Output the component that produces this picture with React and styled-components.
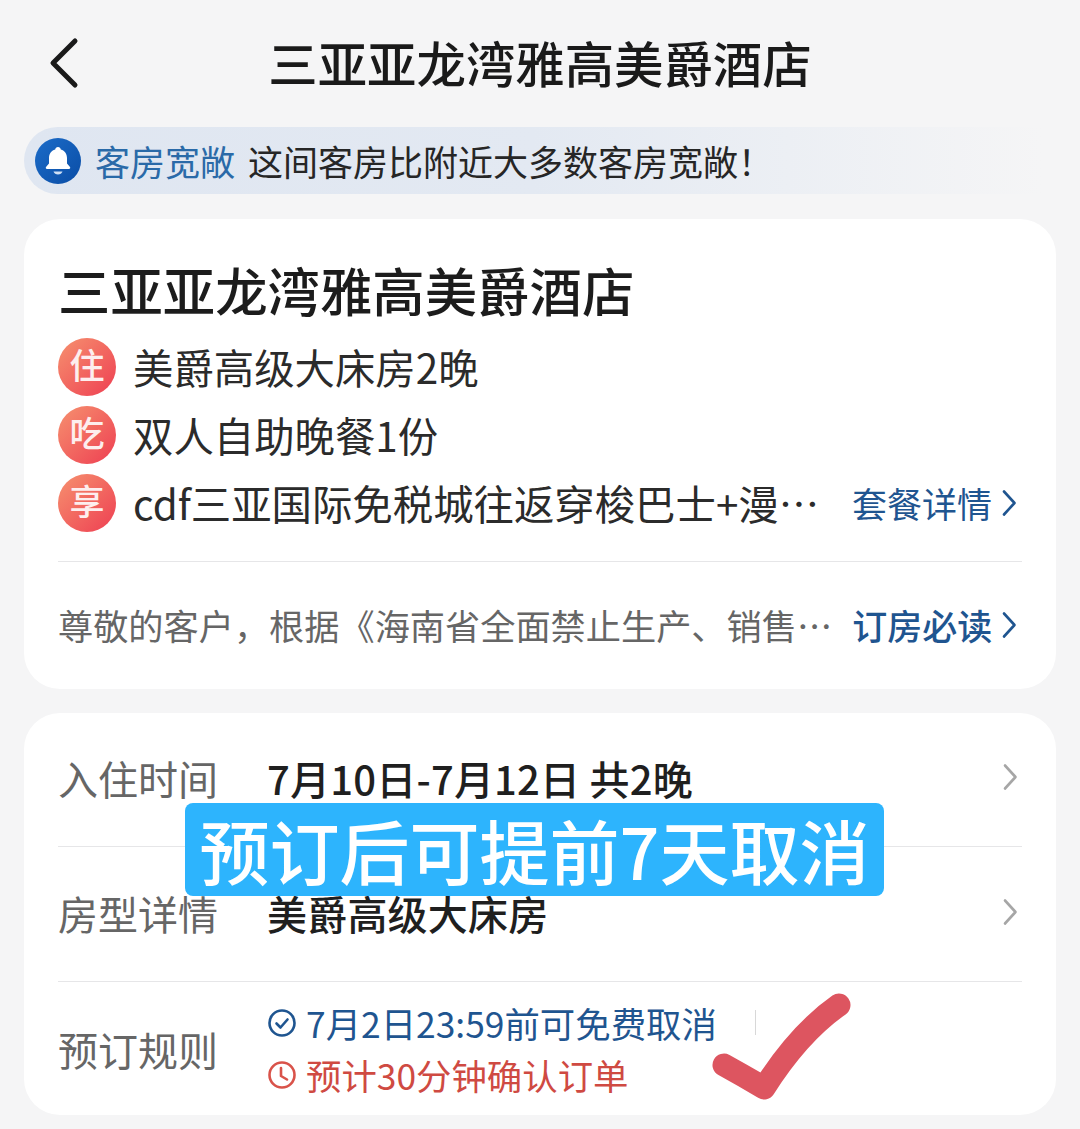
import React from "react";
import styled, { createGlobalStyle } from "styled-components";

const GlobalStyle = createGlobalStyle`
  html, body {
    margin: 0;
    padding: 0;
    background: #f5f5f6;
  }
  * {
    box-sizing: border-box;
  }
`;

const Page = styled.div`
  width: 1080px;
  height: 1129px;
  overflow: hidden;
  background: #f5f5f6;
  padding: 0 24px;
  display: flex;
  flex-direction: column;
  font-family: "Noto Sans CJK SC", "Noto Sans", sans-serif;
  color: #222;
`;

const Header = styled.div`
  height: 127px;
  display: flex;
  align-items: center;
  justify-content: center;
  position: relative;
  padding-bottom: 4px;
`;

const BackButton = styled.svg`
  position: absolute;
  left: 24px;
  top: 37px;
`;

const HeaderTitle = styled.div`
  font-size: 49.400px;
  line-height: 60px;
  font-weight: 500;
  color: #1a1a1a;
`;

const Banner = styled.div`
  height: 67px;
  width: 1018px;
  flex: none;
  display: flex;
  align-items: center;
  padding-left: 11px;
  border-radius: 34px 0 0 34px;
  background: linear-gradient(90deg, #dfe6f1 0%, #e3e9f2 50%, #f5f5f6 100%);
`;

const BellBadge = styled.div`
  width: 46px;
  height: 46px;
  border-radius: 50%;
  background: linear-gradient(135deg, #1c6cc8, #0a4da6);
  display: flex;
  align-items: center;
  justify-content: center;
  flex: none;
`;

const BannerTag = styled.span`
  font-size: 35px;
  color: #2a6aa8;
  margin-left: 14px;
  line-height: 44px;
`;

const BannerText = styled.span`
  font-size: 35px;
  color: #262626;
  margin-left: 13px;
  line-height: 44px;
`;

const Card = styled.div`
  background: #fff;
  border-radius: 36px;
  padding: 0 34px;
  display: flex;
  flex-direction: column;
  position: relative;
`;

const PackageCard = styled(Card)`
  margin-top: 25px;
  height: 470px;
  padding-top: 37px;
`;

const BookingCard = styled(Card)`
  margin-top: 24px;
  height: 402px;
`;

const HotelName = styled.div`
  font-size: 52.400px;
  line-height: 66px;
  font-weight: 500;
  color: #1c1c1c;
  margin-bottom: 11px;
`;

const PerkRow = styled.div`
  height: 70px;
  display: flex;
  align-items: center;
  gap: 17px;
`;

const PerkIcon = styled.div`
  width: 58px;
  height: 58px;
  border-radius: 50%;
  flex: none;
  background: linear-gradient(135deg, #f6916f, #ee3f52);
  color: #fdeeee;
  font-size: 35px;
  font-weight: 500;
  line-height: 52px;
  text-align: center;
`;

const PerkText = styled.div`
  font-size: 40.400px;
  line-height: 52px;
  color: #2b2b2b;
  flex: 1;
  white-space: nowrap;
`;

const MoreLink = styled.div`
  display: flex;
  align-items: center;
  gap: 9px;
  padding-right: 5px;
  font-size: 35px;
  line-height: 46px;
  font-weight: ${({ $strong }) => ($strong ? 500 : 400)};
  color: #1f5590;
  white-space: nowrap;
  flex: none;
`;

const Divider = styled.div`
  height: 1px;
  background: #e6e6e8;
  flex: none;
`;

const PerkDivider = styled(Divider)`
  margin-top: 24px;
`;

const NoticeRow = styled.div`
  display: flex;
  align-items: center;
  gap: 20px;
  height: 130px;
  padding-bottom: 1px;
`;

const NoticeText = styled.div`
  font-size: 35.200px;
  line-height: 46px;
  color: #666;
  flex: 1;
  white-space: nowrap;
`;

const InfoRow = styled.div`
  height: ${({ $h }) => $h}px;
  padding-bottom: ${({ $lift }) => $lift || 0}px;
  display: flex;
  align-items: center;
  flex: none;
`;

const InfoLabel = styled.div`
  width: 209px;
  font-size: 40px;
  line-height: 52px;
  color: #666;
  flex: none;
`;

const InfoValue = styled.div`
  flex: 1;
  font-size: 40px;
  line-height: 50px;
  font-weight: 500;
  letter-spacing: 0.200px;
  color: #1f1f1f;
  white-space: nowrap;
`;

const RowArrow = styled.div`
  display: flex;
  padding-right: 4px;
  margin-top: -2px;
`;

const Rules = styled.div`
  display: flex;
  flex-direction: column;
  gap: 8px;
`;

const RuleLine = styled.div`
  display: flex;
  align-items: center;
  gap: 9px;
  font-size: 35.400px;
  line-height: 44px;
  color: ${({ $color }) => $color};
  white-space: nowrap;
`;

const CancelBadge = styled.div`
  position: absolute;
  left: 161px;
  top: 90px;
  width: 699px;
  height: 93px;
  border-radius: 8px;
  background: #2db4fd;
  color: #fff;
  font-size: 70px;
  line-height: 93px;
  font-weight: 500;
  text-align: center;
  white-space: nowrap;
`;

const RuleTick = styled.div`
  position: absolute;
  left: 731px;
  top: 297px;
  width: 1px;
  height: 25px;
  background: #d8d8d8;
`;

const CheckMark = styled.svg`
  position: absolute;
  left: 680px;
  top: 270px;
`;

const Bell = () => (
  <svg width="30" height="32" viewBox="0 0 30 32">
    <path d="M15 2c1.6 0 2.6 1 2.8 2.4C22 5.6 24 9 24 13v5.5l3 3.5c.6.8.1 2-1 2H4c-1.1 0-1.6-1.2-1-2l3-3.5V13c0-4 2-7.4 6.2-8.6C12.4 3 13.400 2 15 2z" fill="#fff" />
    <path d="M10.500 26.500h9c-.6 2-2.400 3-4.500 3s-3.900-1-4.500-3z" fill="#cfe0f5" />
  </svg>
);

const Chevron = ({ color = "#1f5590" }) => (
  <svg width="16" height="30" viewBox="0 0 16 30" fill="none">
    <path d="M3 3.500l10.500 11.500L3 26.500" stroke={color} strokeWidth="2.600" strokeLinecap="round" strokeLinejoin="round" />
  </svg>
);

const CheckCircle = () => (
  <svg width="30" height="30" viewBox="0 0 30 30" fill="none" stroke="#1f5590" strokeWidth="2.600">
    <circle cx="15" cy="15" r="12.500" />
    <path d="M9.500 15.500l4 4 7-8" strokeLinecap="round" strokeLinejoin="round" />
  </svg>
);

const Clock = () => (
  <svg width="30" height="30" viewBox="0 0 30 30" fill="none" stroke="#d9534a" strokeWidth="2.600">
    <circle cx="15" cy="15" r="12.500" />
    <path d="M14 8v8l6 3.500" strokeLinecap="round" strokeLinejoin="round" />
  </svg>
);

const perks = [
  { icon: "住", text: "美爵高级大床房2晚" },
  { icon: "吃", text: "双人自助晚餐1份" },
  { icon: "享", text: "cdf三亚国际免税城往返穿梭巴士+漫⋯", link: "套餐详情" },
];

const App = () => {
  return (
    <Page>
      <GlobalStyle />
      <Header>
        <BackButton width="32" height="52" viewBox="0 0 32 52" fill="none">
          <path d="M27 4L5 26l22 22" stroke="#1a1a1a" strokeWidth="5" strokeLinecap="round" strokeLinejoin="round" />
        </BackButton>
        <HeaderTitle>三亚亚龙湾雅高美爵酒店</HeaderTitle>
      </Header>

      <Banner>
        <BellBadge>
          <Bell />
        </BellBadge>
        <BannerTag>客房宽敞</BannerTag>
        <BannerText>这间客房比附近大多数客房宽敞！</BannerText>
      </Banner>

      <PackageCard>
        <HotelName>三亚亚龙湾雅高美爵酒店</HotelName>
        {perks.map((perk) => (
          <PerkRow key={perk.icon}>
            <PerkIcon>{perk.icon}</PerkIcon>
            <PerkText>{perk.text}</PerkText>
            {perk.link && (
              <MoreLink>
                {perk.link}
                <Chevron />
              </MoreLink>
            )}
          </PerkRow>
        ))}
        <PerkDivider />
        <NoticeRow>
          <NoticeText>尊敬的客户，根据《海南省全面禁止生产、销售⋯</NoticeText>
          <MoreLink $strong>
            订房必读
            <Chevron />
          </MoreLink>
        </NoticeRow>
      </PackageCard>

      <BookingCard>
        <InfoRow $h={133} $lift={3}>
          <InfoLabel>入住时间</InfoLabel>
          <InfoValue>7月10日-7月12日 共2晚</InfoValue>
          <RowArrow>
            <Chevron color="#a6a6a6" />
          </RowArrow>
        </InfoRow>
        <Divider />
        <InfoRow $h={134} $lift={3}>
          <InfoLabel>房型详情</InfoLabel>
          <InfoValue>美爵高级大床房</InfoValue>
          <RowArrow>
            <Chevron color="#a6a6a6" />
          </RowArrow>
        </InfoRow>
        <Divider />
        <InfoRow $h={133}>
          <InfoLabel>预订规则</InfoLabel>
          <Rules>
            <RuleLine $color="#1f5590">
              <CheckCircle />
              7月2日23:59前可免费取消
            </RuleLine>
            <RuleLine $color="#cf4a42">
              <Clock />
              预计30分钟确认订单
            </RuleLine>
          </Rules>
        </InfoRow>
        <CancelBadge>预订后可提前7天取消</CancelBadge>
        <RuleTick />
        <CheckMark width="150" height="120" viewBox="0 0 150 120" fill="none">
          <path d="M20 82Q40 93 60 105Q95 50 135 22" stroke="#dd5560" strokeWidth="23" strokeLinecap="round" strokeLinejoin="round" />
        </CheckMark>
      </BookingCard>
    </Page>
  );
};

export default App;
